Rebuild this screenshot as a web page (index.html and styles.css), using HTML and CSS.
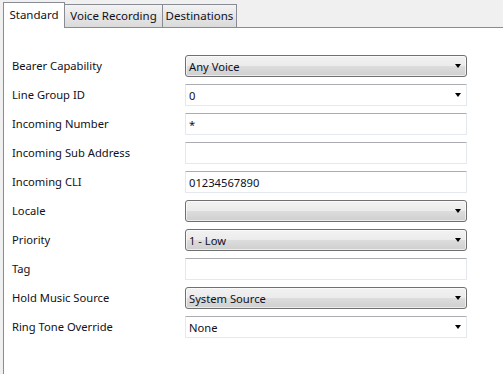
FILE: index.html
```html
<!DOCTYPE html>
<html>
<head>
    <title>Line Settings</title>
    <link rel="stylesheet" href="styles.css">
</head>
<body>

    <!-- Pestañas -->
    <div class="tabs">
        <div class="tab selected tab-standard">Standard</div>
        <div class="tab tab-voice">Voice Recording</div>
        <div class="tab tab-dest">Destinations</div>
    </div>

    <!-- Panel -->
    <div class="panel">
        <div class="form">
            <label>Bearer Capability</label>
            <div class="combo"><span>Any Voice</span><i class="arrow"></i></div>

            <label>Line Group ID</label>
            <div class="combo edit"><span>0</span><i class="arrow"></i></div>

            <label>Incoming Number</label>
            <div class="field"><span>*</span></div>

            <label>Incoming Sub Address</label>
            <div class="field"><span></span></div>

            <label>Incoming CLI</label>
            <div class="field"><span>01234567890</span></div>

            <label>Locale</label>
            <div class="combo"><span></span><i class="arrow"></i></div>

            <label>Priority</label>
            <div class="combo"><span>1 - Low</span><i class="arrow"></i></div>

            <label>Tag</label>
            <div class="field"><span></span></div>

            <label>Hold Music Source</label>
            <div class="combo"><span>System Source</span><i class="arrow"></i></div>

            <label>Ring Tone Override</label>
            <div class="combo edit"><span>None</span><i class="arrow"></i></div>
        </div>
    </div>

</body>
</html>
```

FILE: styles.css
```css
/* Base */
html, body {
    margin: 0;
    height: 100%;
}

body {
    background-color: #f0f0f0;
    font-family: "Noto Sans", "Open Sans", sans-serif;
    font-size: 11.2px;
    color: #101020;
    overflow: hidden;
}

/* Pestañas */
.tabs {
    display: flex;
    align-items: flex-end;
    height: 27px;
    padding-left: 3px;
    box-sizing: border-box;
}

.tab {
    height: 23px;
    box-sizing: border-box;
    text-align: center;
    font-size: 11.5px;
    line-height: 21px;
    border: 1px solid #898c95;
    border-bottom: none;
    margin-left: -1px;
    background: linear-gradient(#f3f3f3, #e6e6e6 50%, #dadada);
    white-space: nowrap;
}

.tab:first-child {
    margin-left: 0;
}

.tab-standard { width: 62px; }
.tab-voice { width: 99px; }
.tab-dest { width: 75px; }

.tab.selected {
    background: #fff;
    line-height: 24px;
    position: relative;
    z-index: 1;
    margin-bottom: -1px;
    height: 26px;
}

/* Panel */
.panel {
    margin-left: 3px;
    height: calc(100% - 27px);
    background-color: #fff;
    border-top: 1px solid #898c95;
    border-left: 1px solid #898c95;
    box-sizing: border-box;
}

.form {
    display: grid;
    grid-template-columns: 173px 282px;
    row-gap: 7px;
    padding: 27px 0 0 8px;
    align-items: center;
}

label {
    line-height: 22px;
}

/* Campos */
.field, .combo {
    height: 22px;
    box-sizing: border-box;
    display: flex;
    align-items: center;
    padding: 0 4px 0 3px;
}

.field {
    border: 1px solid #e3e9ef;
    border-top-color: #abadb3;
    border-radius: 1px;
}

.combo {
    border: 1px solid #707070;
    border-radius: 3px;
    background: linear-gradient(#f2f2f2, #ebebeb 50%, #dddddd 50%, #cfcfcf);
    box-shadow: inset 0 0 0 1px rgba(255, 255, 255, 0.6);
}

.combo.edit {
    background: #fff;
    border: 1px solid #e3e9ef;
    border-top-color: #abadb3;
    border-radius: 1px;
    box-shadow: none;
}

.combo span, .field span {
    flex: 1;
}

.arrow {
    width: 0;
    height: 0;
    border-left: 3.5px solid transparent;
    border-right: 3.5px solid transparent;
    border-top: 4px solid #000;
    margin-right: 1px;
}
```
